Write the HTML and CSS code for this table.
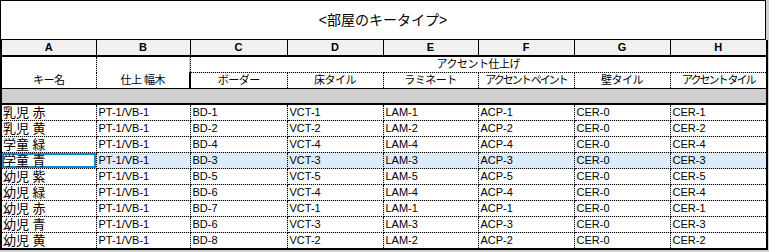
FILE: index.html
```html
<!DOCTYPE html>
<html lang="ja">
<head>
  <meta charset="UTF-8">
  <title>部屋のキータイプ</title>
  <link rel="stylesheet" href="styles.css">
</head>
<body>
  <div class="sheet">
    <div class="sheet-title">&lt;部屋のキータイプ&gt;</div>

    <table class="grid">
      <colgroup>
        <col style="width: 95px">
        <col style="width: 94px">
        <col style="width: 97px">
        <col style="width: 96px">
        <col style="width: 95px">
        <col style="width: 96px">
        <col style="width: 96px">
        <col style="width: 97px">
      </colgroup>
      <thead>
        <tr class="letters">
          <th>A</th><th>B</th><th>C</th><th>D</th><th>E</th><th>F</th><th>G</th><th>H</th>
        </tr>
        <tr class="head-top">
          <th rowspan="2" class="head-key">キー名</th>
          <th rowspan="2" class="head-key">仕上 幅木</th>
          <th colspan="6" class="head-group">アクセント仕上げ</th>
        </tr>
        <tr class="head-bottom">
          <th>ボーダー</th>
          <th>床タイル</th>
          <th>ラミネート</th>
          <th class="narrow">アクセント ペイント</th>
          <th>壁タイル</th>
          <th class="narrow">アクセント タイル</th>
        </tr>
        <tr class="band">
          <td colspan="8"></td>
        </tr>
      </thead>
      <tbody>
        <tr><td class="key">乳児 赤</td><td>PT-1/VB-1</td><td>BD-1</td><td>VCT-1</td><td>LAM-1</td><td>ACP-1</td><td>CER-0</td><td>CER-1</td></tr>
        <tr><td class="key">乳児 黄</td><td>PT-1/VB-1</td><td>BD-2</td><td>VCT-2</td><td>LAM-2</td><td>ACP-2</td><td>CER-0</td><td>CER-2</td></tr>
        <tr><td class="key">学童 緑</td><td>PT-1/VB-1</td><td>BD-4</td><td>VCT-4</td><td>LAM-4</td><td>ACP-4</td><td>CER-0</td><td>CER-4</td></tr>
        <tr class="selected"><td class="key active">学童 青</td><td>PT-1/VB-1</td><td>BD-3</td><td>VCT-3</td><td>LAM-3</td><td>ACP-3</td><td>CER-0</td><td>CER-3</td></tr>
        <tr><td class="key">幼児 紫</td><td>PT-1/VB-1</td><td>BD-5</td><td>VCT-5</td><td>LAM-5</td><td>ACP-5</td><td>CER-0</td><td>CER-5</td></tr>
        <tr><td class="key">幼児 緑</td><td>PT-1/VB-1</td><td>BD-6</td><td>VCT-4</td><td>LAM-4</td><td>ACP-4</td><td>CER-0</td><td>CER-4</td></tr>
        <tr><td class="key">幼児 赤</td><td>PT-1/VB-1</td><td>BD-7</td><td>VCT-1</td><td>LAM-1</td><td>ACP-1</td><td>CER-0</td><td>CER-1</td></tr>
        <tr><td class="key">幼児 青</td><td>PT-1/VB-1</td><td>BD-6</td><td>VCT-3</td><td>LAM-3</td><td>ACP-3</td><td>CER-0</td><td>CER-3</td></tr>
        <tr><td class="key">幼児 黄</td><td>PT-1/VB-1</td><td>BD-8</td><td>VCT-2</td><td>LAM-2</td><td>ACP-2</td><td>CER-0</td><td>CER-2</td></tr>
      </tbody>
    </table>
  </div>
</body>
</html>
```

FILE: styles.css
```css
body {
  margin: 0;
  background: #d0d0d0;
  font-family: "Liberation Sans", "Noto Sans CJK JP", sans-serif;
  color: #000;
}

.sheet {
  width: 766px;
}

.sheet-title {
  box-sizing: border-box;
  height: 40px;
  background: white;
  border: 1px solid #000;
  display: flex;
  align-items: center;
  justify-content: center;
  font-size: 14px;
  padding-bottom: 2px;
}

.grid {
  width: 766px;
  table-layout: fixed;
  border-collapse: collapse;
  font-size: 11px;
}

.grid th,
.grid td {
  padding: 0 2px;
  white-space: nowrap;
  overflow: hidden;
}

/* column letters */
.letters th {
  height: 15px;
  background: #f0f0f0;
  border-left: 1px solid #000;
  border-right: 1px solid #000;
  border-bottom: 2px solid #000;
  font-weight: bold;
  font-size: 11px;
  line-height: 15px;
  text-align: center;
}

.letters th:first-child {
  border-left-color: #f0f0f0;
}

/* header labels */
.head-top th,
.head-bottom th {
  background: white;
  font-weight: normal;
  font-size: 11px;
  letter-spacing: -0.5px;
  text-align: center;
  border-right: 1px dotted #000;
  height: 15px;
  line-height: 15px;
}

.head-bottom th.narrow {
  letter-spacing: -2px;
  padding: 0;
}

.head-key {
  vertical-align: bottom;
}

.grid th:first-child,
.grid td:first-child {
  border-left: 2px solid #000;
}

.grid tr > :last-child {
  border-right: 2px solid #000;
}

.head-group {
  border-bottom: 1px dotted #000;
}

.band td {
  height: 14px;
  padding: 0;
  background: #d0d0d0;
  border-top: 1px solid #000;
  border-bottom: 2px solid #000;
}

/* data rows */
tbody td {
  height: 15px;
  line-height: 15px;
  background: white;
  border-right: 1px dotted #000;
  border-bottom: 1px dotted #000;
}

tbody tr:last-child td {
  border-bottom: 2px solid #000;
}

tbody td.key {
  font-size: 13px;
  padding-left: 1px;
}

tbody tr.selected td {
  background: #dcebf8;
}

tbody tr.selected td.active {
  background: white;
  box-shadow: inset 0 0 0 2px #1288cf;
}
```
